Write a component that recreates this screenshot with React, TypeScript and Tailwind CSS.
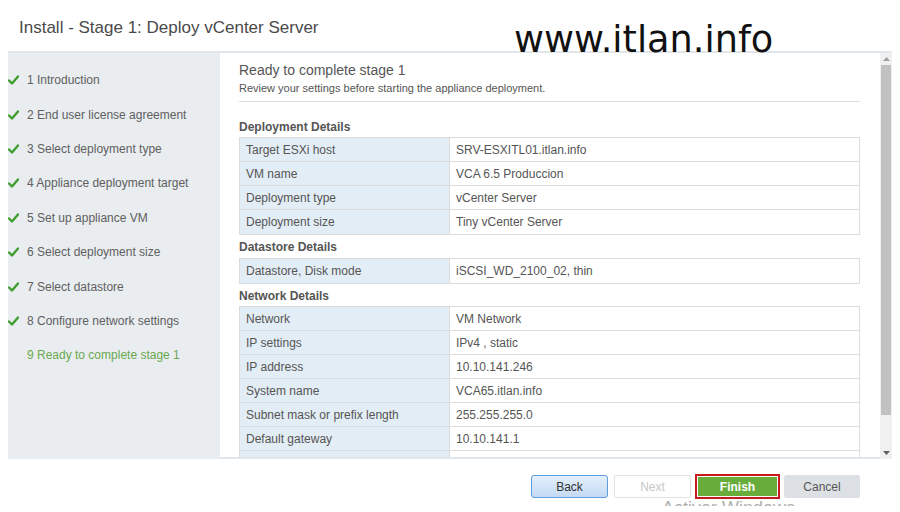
import React from "react";

const Check = () => (
  <svg width="11" height="10" viewBox="0 0 11 10" className="shrink-0">
    <path d="M1 5.5 L4 8.5 L10 1.5" fill="none" stroke="#3f9e2f" strokeWidth="2.4" strokeLinecap="round" strokeLinejoin="round" />
  </svg>
);

const steps = [
  "1 Introduction",
  "2 End user license agreement",
  "3 Select deployment type",
  "4 Appliance deployment target",
  "5 Set up appliance VM",
  "6 Select deployment size",
  "7 Select datastore",
  "8 Configure network settings",
];

const Row = ({ k, v }: { k: string; v: string }) => (
  <div className="flex h-[24px] border-b border-[#dcdcdc] last:border-b-0">
    <div className="w-[210px] bg-[#e3edf5] border-r border-[#dcdcdc] pl-[6px] flex items-center">{k}</div>
    <div className="flex-1 bg-white pl-[6px] flex items-center">{v}</div>
  </div>
);

const Table = ({ rows }: { rows: [string, string][] }) => (
  <div className="border border-[#dcdcdc] text-[12px] text-[#555]">
    {rows.map(([k, v]) => (
      <Row key={k} k={k} v={v} />
    ))}
  </div>
);

export default function App() {
  return (
    <div className="w-[900px] h-[512px] bg-white relative overflow-hidden" style={{ fontFamily: '"Liberation Sans", Arial, sans-serif' }}>
      <div className="h-[51px] pl-[19px] pt-[15px] text-[17px] text-[#4a4a4a]">Install - Stage 1: Deploy vCenter Server</div>
      <div className="absolute left-[514px] top-[22px] text-[36.7px] text-[#111] leading-none" style={{ fontFamily: '"DejaVu Sans", sans-serif' }}>
        www.itlan.info
      </div>
      <div className="ml-[8px] w-[884px] flex border-t-2 border-[#e1e6ea]">
        <div className="w-[212px] h-[406px] bg-[#e9edf0] pt-[10px]">
          {steps.map((s) => (
            <div key={s} className="h-[34.4px] flex items-center gap-[8px] text-[12px] text-[#606060]">
              <Check />
              <span>{s}</span>
            </div>
          ))}
          <div className="h-[34.4px] flex items-center pl-[19px] text-[12px] text-[#6aa84f]">9 Ready to complete stage 1</div>
        </div>
        <div className="w-[660px] h-[406px] overflow-hidden pl-[19px] pr-[20px] border-b-2 border-[#e1e6ea]">
          <div className="pt-[9px] text-[14px] text-[#555] leading-[17px]">Ready to complete stage 1</div>
          <div className="mt-[2px] text-[11px] text-[#555] leading-[14px] pb-[6px] border-b border-[#d8dde1]">Review your settings before starting the appliance deployment.</div>
          <div className="text-[12px] font-bold text-[#555] pt-[18px] pb-[3px] leading-[14px]">Deployment Details</div>
          <Table
            rows={[
              ["Target ESXi host", "SRV-ESXITL01.itlan.info"],
              ["VM name", "VCA 6.5 Produccion"],
              ["Deployment type", "vCenter Server"],
              ["Deployment size", "Tiny vCenter Server"],
            ]}
          />
          <div className="text-[12px] font-bold text-[#555] pt-[5px] pb-[4px] leading-[14px]">Datastore Details</div>
          <Table rows={[["Datastore, Disk mode", "iSCSI_WD_2100_02, thin"]]} />
          <div className="text-[12px] font-bold text-[#555] pt-[5px] pb-[3px] leading-[14px]">Network Details</div>
          <Table
            rows={[
              ["Network", "VM Network"],
              ["IP settings", "IPv4 , static"],
              ["IP address", "10.10.141.246"],
              ["System name", "VCA65.itlan.info"],
              ["Subnet mask or prefix length", "255.255.255.0"],
              ["Default gateway", "10.10.141.1"],
              ["DNS", "10.10.141.40"],
            ]}
          />
        </div>
        <div className="w-[12px] h-[406px] bg-[#f0f0f0] flex flex-col items-center">
          <div className="h-[12px] flex items-center justify-center">
            <svg width="7" height="4" viewBox="0 0 7 4"><path d="M0 4 L3.5 0 L7 4 Z" fill="#a0a0a0" /></svg>
          </div>
          <div className="w-[10px] h-[350px] bg-[#c1c1c1]" />
          <div className="flex-1" />
          <div className="h-[12px] flex items-center justify-center">
            <svg width="7" height="4" viewBox="0 0 7 4"><path d="M0 0 L7 0 L3.5 4 Z" fill="#606060" /></svg>
          </div>
        </div>
      </div>
      <div className="flex justify-end items-center gap-[6px] pr-[40px] pt-[15px] text-[12px] relative">
        <button className="w-[77px] h-[23px] rounded-[3px] border border-[#5b9de0] text-[#333] bg-gradient-to-b from-[#e3eefb] to-[#c5dbf4]">Back</button>
        <button className="w-[77px] h-[23px] rounded-[2px] border border-[#e2e2e2] text-[#c8c8c8] bg-white">Next</button>
        <div className="border-2 border-[#c8191e] p-[1px] -mx-[2px]">
          <button className="w-[79px] h-[19px] bg-[#68ad3b] text-white font-bold block">Finish</button>
        </div>
        <button className="w-[76px] h-[23px] rounded-[2px] bg-[#dde1e5] text-[#555]">Cancel</button>
        <div className="absolute left-[662px] top-[40px] h-[7px] overflow-hidden">
          <div className="text-[18px] text-[#b0b0b0] leading-none whitespace-nowrap">Activar Windows</div>
        </div>
      </div>
    </div>
  );
}
